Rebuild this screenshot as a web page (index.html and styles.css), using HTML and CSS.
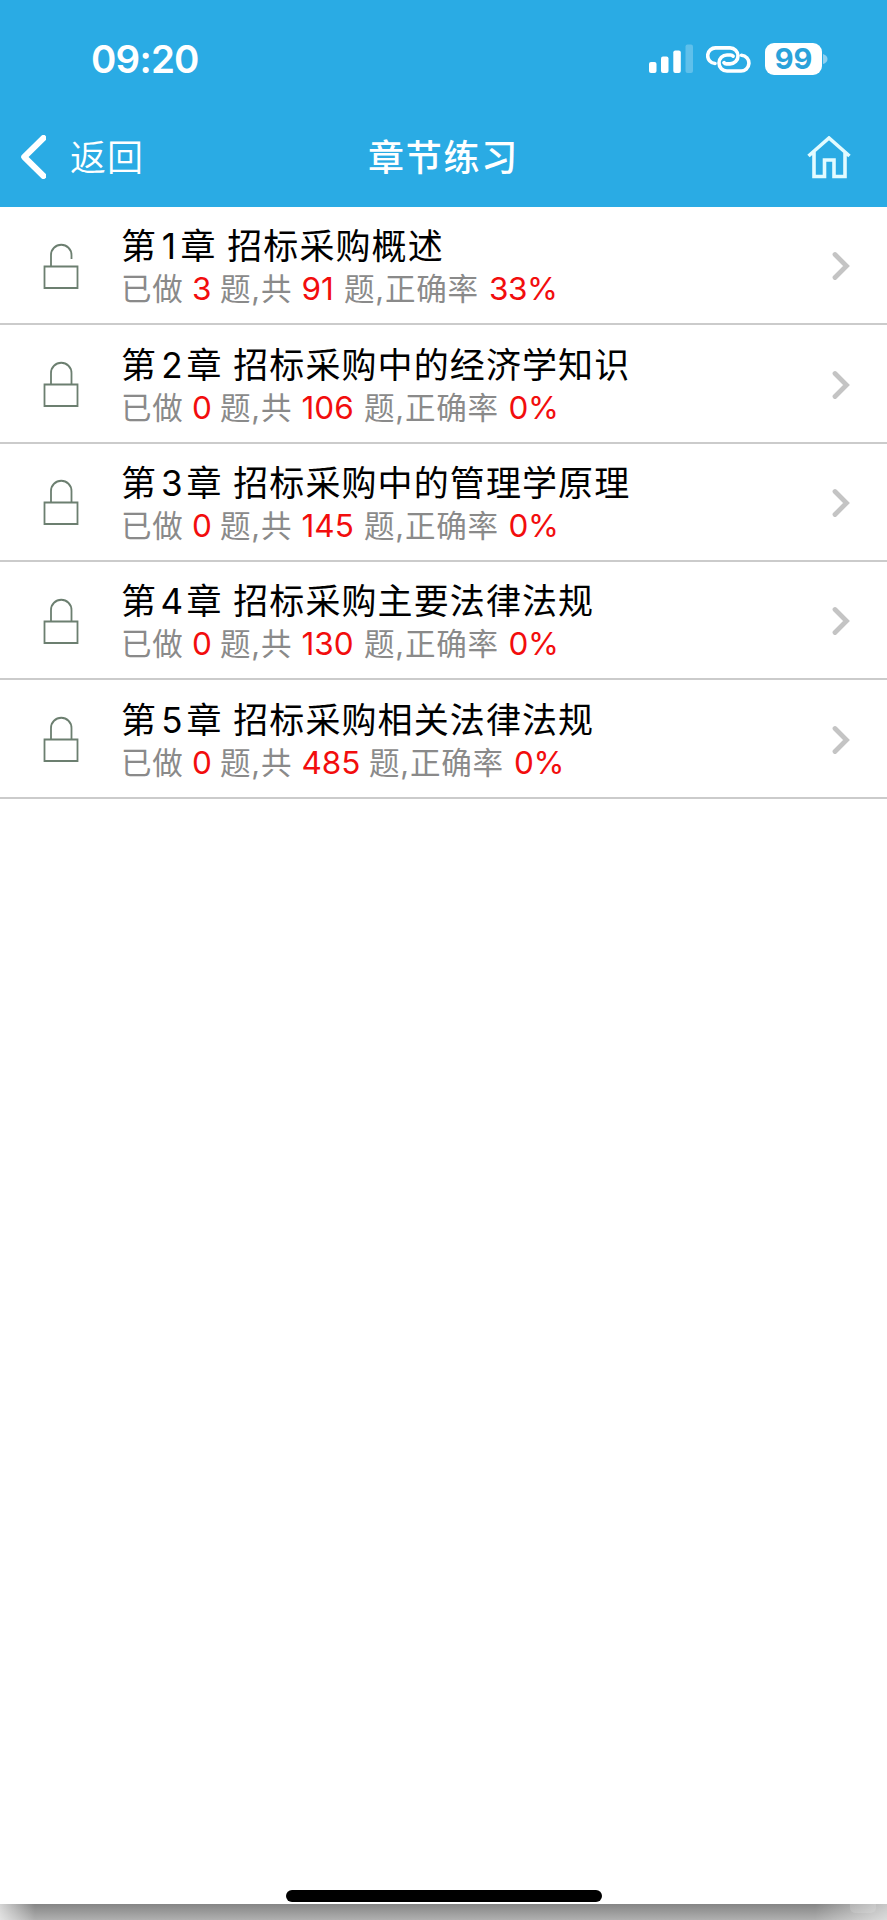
FILE: index.html
```html
<!DOCTYPE html>
<html lang="zh-CN">
<head>
<meta charset="utf-8">
<title>章节练习</title>
<link rel="stylesheet" href="styles.css">
</head>
<body>
<svg class="defs" width="0" height="0">
  <symbol id="closed" viewBox="0 0 36 46"><path d="M1.500 23.500h33v21.500h-33zM8 23.500V12a10 10 0 0 1 20.500 0v11.500"/></symbol>
  <symbol id="open" viewBox="0 0 36 46"><path d="M1.500 23.500h33v21.500h-33zM8 23.500V12a10 10 0 0 1 20.500 0v4"/></symbol>
  <symbol id="chevron" viewBox="0 0 18 30"><path d="M3 3.500l11.500 11.500L3 26.500"/></symbol>
</svg>
<div class="screen">
  <header class="top">
    <div class="status">
      <span class="time">09:20</span>
      <svg class="signal" width="45" height="30" viewBox="0 0 45 30"><rect x="0" y="18" width="7.500" height="11" rx="2"/><rect x="12" y="12.500" width="7.500" height="16.500" rx="2"/><rect x="24.300" y="6.500" width="7.500" height="22.500" rx="2"/><rect class="dim" x="36.500" y=".5" width="7.500" height="28.500" rx="2"/></svg>
      <svg class="link" width="46" height="30" viewBox="0 0 46 30"><path d="M9 19.500A7.800 7.800 0 0 1 10 3.900H24a8 8 0 0 1 0 16H20.500a3 3 0 0 1-2.500-1.200M35.500 11.200A7.800 7.800 0 0 1 34.500 27H21a8 8 0 0 1 0-16H24.500a3 3 0 0 1 2.500 1.200"/></svg>
      <span class="battery">99</span>
      <svg class="cap" width="5" height="10" viewBox="0 0 5 10"><path d="M0 0Q4.500 1.500 4.500 5T0 10z"/></svg>
    </div>
    <nav class="nav">
      <a class="back"><svg width="27" height="44" viewBox="0 0 27 44"><path d="M24.500 3L5.200 22l19.300 19"/></svg><span>返回</span></a>
      <h1 class="heading">章节练习</h1>
      <svg class="home" width="44" height="43" viewBox="0 0 44 43"><path d="M1.500 20L22 2l20.500 18M7 16v24.500h10.500V24h9.500v16.500H38V16"/></svg>
    </nav>
  </header>
  <main class="list">
    <article class="row"><svg class="lock"><use href="#open"/></svg><div class="info"><h2 class="title one">第<i>1</i>章<s></s>招标采购概述</h2><p class="stats n2"><span>已做</span><b>3</b><span>题,共</span><b>91</b><span>题,正确率</span><b>33%</b></p></div><svg class="go"><use href="#chevron"/></svg></article>
    <article class="row"><svg class="lock"><use href="#closed"/></svg><div class="info"><h2 class="title">第<i>2</i>章<s></s>招标采购中的经济学知识</h2><p class="stats"><span>已做</span><b>0</b><span>题,共</span><b>106</b><span>题,正确率</span><b>0%</b></p></div><svg class="go"><use href="#chevron"/></svg></article>
    <article class="row"><svg class="lock"><use href="#closed"/></svg><div class="info"><h2 class="title">第<i>3</i>章<s></s>招标采购中的管理学原理</h2><p class="stats"><span>已做</span><b>0</b><span>题,共</span><b>145</b><span>题,正确率</span><b>0%</b></p></div><svg class="go"><use href="#chevron"/></svg></article>
    <article class="row"><svg class="lock"><use href="#closed"/></svg><div class="info"><h2 class="title">第<i>4</i>章<s></s>招标采购主要法律法规</h2><p class="stats"><span>已做</span><b>0</b><span>题,共</span><b>130</b><span>题,正确率</span><b>0%</b></p></div><svg class="go"><use href="#chevron"/></svg></article>
    <article class="row"><svg class="lock"><use href="#closed"/></svg><div class="info"><h2 class="title">第<i>5</i>章<s></s>招标采购相关法律法规</h2><p class="stats wide"><span>已做</span><b>0</b><span>题,共</span><b>485</b><span>题,正确率</span><b>0%</b></p></div><svg class="go"><use href="#chevron"/></svg></article>
  </main>
  <div class="indicator"></div>
  <footer class="edge"><span class="tab"></span></footer>
</div>
</body>
</html>
```
FILE: styles.css
```css
* { box-sizing: border-box; }
body { margin: 0; font-family: Inter, "Noto Sans CJK SC", sans-serif; }
.defs { display: block; }
.screen { width: 887px; height: 1920px; display: flex; flex-direction: column; background: #fff; overflow: hidden; }
.top { height: 207px; flex: none; background: #2aabe4; color: #fff; }
.status { height: 108px; padding: 10px 0 0 91px; display: flex; align-items: center; }
.time { width: 558px; font-size: 38.5px; font-weight: 600; letter-spacing: -.8px; }
.signal { fill: #fff; }
.signal .dim { opacity: .25; }
.link { margin-left: 12px; fill: none; stroke: #fff; stroke-width: 3.6; stroke-linecap: round; }
.battery { width: 57px; height: 32px; margin-left: 13px; border-radius: 9px; background: #fff; color: #2aa2da; font-size: 29px; font-weight: 700; line-height: 32px; text-align: center; }
.cap { margin-left: 1px; fill: #8fd0f0; }
.nav { height: 98px; padding: 0 36px 0 19px; display: grid; grid-template-columns: 250px 1fr 250px; align-items: center; }
.back { display: flex; align-items: center; gap: 24px; font-size: 36px; font-weight: 350; letter-spacing: 1px; }
.back span { padding-bottom: 5px; }
.back svg { fill: none; stroke: #fff; stroke-width: 6; stroke-linecap: round; stroke-linejoin: round; }
.heading { margin: 0; padding: 0 0 4px 17px; text-align: center; font-size: 36px; font-weight: 500; letter-spacing: 1.700px; }
.home { justify-self: end; fill: none; stroke: #e2fbff; stroke-width: 3.6; }
.row { height: 118.350px; padding: 0 37px 0 43px; display: grid; grid-template-columns: 78px 1fr 18px; align-items: center; border-bottom: 2px solid #cbcbcb; }
.info { padding-top: 5px; }
.lock { width: 36px; height: 46px; margin-top: 1px; fill: none; stroke: #6c7f70; stroke-width: 1.8; }
.go { width: 18px; height: 30px; margin-top: 2px; fill: none; stroke: #c4c4c4; stroke-width: 4.8; stroke-linecap: round; }
.title { margin: 0; height: 43px; line-height: 43px; font-size: 35px; font-weight: 400; letter-spacing: 1.100px; color: #000; white-space: nowrap; }
.title i { display: inline-block; width: 29.5px; text-align: center; font-style: normal; letter-spacing: 0; }
.title.one i { width: 23.5px; }
.title s { display: inline-block; width: 10.5px; }
.stats { margin: 0; height: 42px; line-height: 42px; display: grid; grid-template-columns: 71px 28px 81.5px 62.5px 144.5px 90px; font-size: 30.5px; letter-spacing: .8px; color: #8a8a8a; white-space: nowrap; font-weight: 400; }
.stats.n2 { grid-template-columns: 71px 28px 81.5px 42.5px 145px 90px; }
.stats.wide { grid-template-columns: 71px 28px 81.5px 67.5px 145px 90px; }
.stats b { color: #f20d0d; font-weight: 400; font-size: 31.5px; letter-spacing: 0; }
.stats b:last-child { letter-spacing: -.4px; }
.indicator { width: 316px; height: 12px; margin: auto auto 2px; border-radius: 6px; background: #000; }
.edge { height: 16px; flex: none; padding-left: 850px; background: linear-gradient(90deg, rgba(255,255,255,.65), transparent 35px, transparent 815px, rgba(255,255,255,.55)), linear-gradient(#858585, #b0b0b0); }
.tab { display: block; width: 26px; height: 9px; border-radius: 0 0 5px 5px; background: rgba(255,255,255,.14); }
```
